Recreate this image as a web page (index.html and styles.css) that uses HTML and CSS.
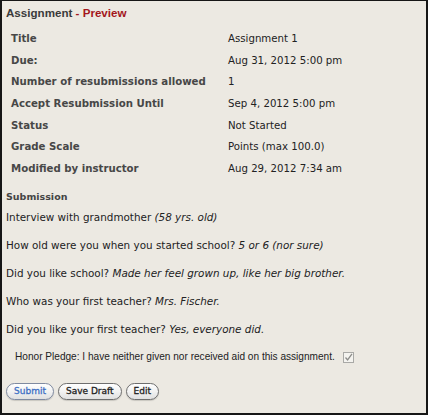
FILE: index.html
```html
<!DOCTYPE html>
<html>
<head>
<meta charset="utf-8">
<link rel="stylesheet" href="styles.css">
</head>
<body>
<div class="panel">
  <h1 class="title">Assignment <span class="preview">- Preview</span></h1>
  <div class="props">
    <div class="label">Title</div><div class="value">Assignment 1</div>
    <div class="label">Due:</div><div class="value">Aug 31, 2012 5:00 pm</div>
    <div class="label">Number of resubmissions allowed</div><div class="value">1</div>
    <div class="label">Accept Resubmission Until</div><div class="value">Sep 4, 2012 5:00 pm</div>
    <div class="label">Status</div><div class="value">Not Started</div>
    <div class="label">Grade Scale</div><div class="value">Points (max 100.0)</div>
    <div class="label">Modified by instructor</div><div class="value">Aug 29, 2012 7:34 am</div>
  </div>
  <h2 class="sub">Submission</h2>
  <div class="answers">
    <p>Interview with grandmother <em>(58 yrs. old)</em></p>
    <p>How old were you when you started school? <em>5 or 6 (nor sure)</em></p>
    <p>Did you like school? <em>Made her feel grown up, like her big brother.</em></p>
    <p>Who was your first teacher? <em>Mrs. Fischer.</em></p>
    <p>Did you like your first teacher? <em>Yes, everyone did.</em></p>
  </div>
  <div class="pledge">
    <span>Honor Pledge: I have neither given nor received aid on this assignment.</span>
    <span class="check"><svg width="11" height="11" viewBox="0 0 11 11"><rect x="0.5" y="0.5" width="10" height="10" fill="#f4f3ef" stroke="#a9a9a6"/><path d="M2.5 5.5 L4.6 8 L9 1.8" fill="none" stroke="#8d8d8a" stroke-width="1.3"/></svg></span>
  </div>
  <div class="buttons">
    <button class="btn primary">Submit</button>
    <button class="btn">Save Draft</button>
    <button class="btn">Edit</button>
  </div>
</div>
</body>
</html>
```
FILE: styles.css
```css
html, body {
  margin: 0;
  padding: 0;
}
body {
  width: 428px;
  height: 415px;
  overflow: hidden;
  background: #ece9e2;
}
.panel {
  box-sizing: border-box;
  width: 428px;
  height: 415px;
  border: 2px solid #161616;
  border-top-width: 1px;
  background: #ece9e2;
  padding: 4px 4px 0 4px;
  font-family: "DejaVu Sans", Verdana, sans-serif;
  color: #222;
}
.title {
  margin: 0;
  font-family: "Liberation Sans", Arial, sans-serif;
  font-size: 11.6px;
  line-height: 16px;
  font-weight: bold;
  color: #3a3a3a;
}
.preview {
  color: #a3161c;
}
.props {
  margin-top: 7px;
  display: grid;
  grid-template-columns: 222px 1fr;
  grid-auto-rows: 21.6px;
  align-items: center;
  font-size: 10.2px;
}
.label {
  padding-left: 5px;
  font-weight: bold;
  color: #474747;
}
.value {
  color: #222;
}
.sub {
  margin: 11px 0 0 0;
  font-size: 9.5px;
  line-height: 14px;
  font-weight: bold;
  color: #444;
}
.answers {
  margin-top: 6px;
  font-size: 10.4px;
  line-height: 14px;
  color: #222;
}
.answers p {
  margin: 0 0 14px 0;
}
.pledge {
  margin-top: 11px;
  padding-left: 9px;
  display: flex;
  align-items: center;
  gap: 8px;
  font-family: "Liberation Sans", Arial, sans-serif;
  font-size: 10.1px;
  line-height: 14px;
  color: #222;
}
.check {
  display: flex;
}
.buttons {
  margin-top: 19px;
  display: flex;
  gap: 4px;
}
.btn {
  height: 17px;
  padding: 0 7px;
  border: 1px solid #6e6e6e;
  border-radius: 9px;
  background: linear-gradient(#ffffff, #f2f2f2 50%, #e0e0e0);
  box-shadow: 0 1px 1px rgba(0,0,0,0.15);
  font-family: "DejaVu Sans", Verdana, sans-serif;
  font-size: 9px;
  font-weight: normal;
  -webkit-text-stroke: 0.3px #222;
  color: #222;
  line-height: 15px;
}
.btn.primary {
  color: #3d6fc4;
  -webkit-text-stroke: 0.3px #3d6fc4;
  border-color: #7f8aa0;
}
```
